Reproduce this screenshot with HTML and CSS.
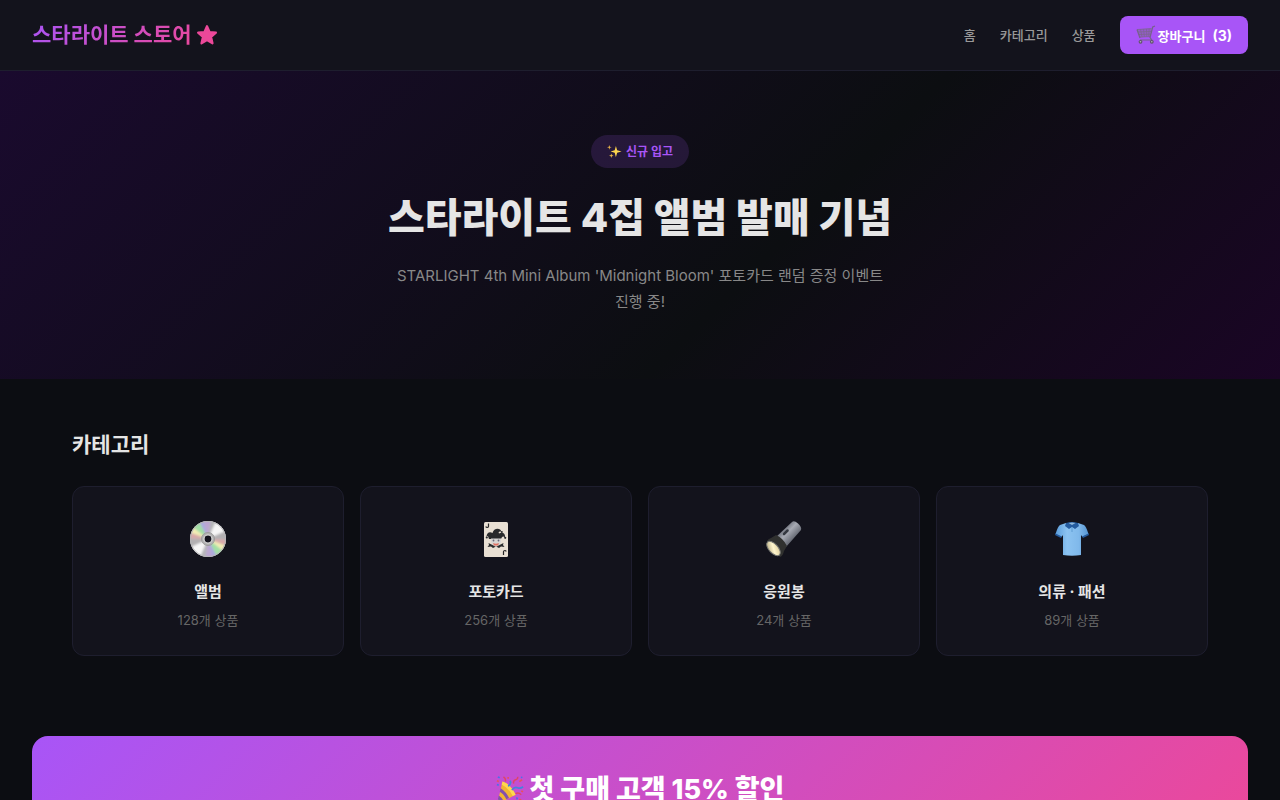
FILE: index.html
```html
<!DOCTYPE html>
<html lang="ko">
<head>
  <meta charset="UTF-8">
  <meta name="viewport" content="width=device-width, initial-scale=1.0">
  <title>스타라이트 스토어</title>
  <link rel="stylesheet" href="styles.css">
</head>
<body>
  <header class="header">
    <a class="logo" href="#">
      <span class="logo-text">스타라이트 스토어</span>
      <svg class="logo-star" viewBox="0 0 20 20" aria-hidden="true">
        <path d="M10 2l2.300 5.300 5.800.6-4.400 3.900 1.300 5.800L10 14.600l-5 3 1.300-5.800L1.900 7.900l5.800-.6z" fill="#ec4899" stroke="#ec4899" stroke-width="2" stroke-linejoin="round"/>
      </svg>
    </a>
    <nav class="nav">
      <a class="nav-link" href="#">홈</a>
      <a class="nav-link" href="#categories">카테고리</a>
      <a class="nav-link" href="#">상품</a>
      <button class="cart-btn" type="button">
        <svg class="cart-icon" viewBox="0 0 20 20" aria-hidden="true">
          <path d="M1 4.500l14.500-1.500-1.500 8.500-10 1z" fill="#8a5fb5" opacity=".7"/>
          <path d="M1 4.500l14.500-.8M2 7l13-.6M2.800 9.500l11.700-.4M3.500 12l10.500-.4M4.500 4.300l1.500 7.700M7.500 4.200l.9 7.600M10.500 4l.3 7.700M13.200 3.800l-.5 7.700" fill="none" stroke="#7d6492" stroke-width=".8"/>
          <path d="M1 4.500l3 8.500M19 1l-2.300 1L14 12.500l1.800 2.500H4" fill="none" stroke="#75628a" stroke-width="1.200"/>
          <circle cx="4.500" cy="16.800" r="1.900" fill="#5d5368"/>
          <circle cx="15.800" cy="16.800" r="1.900" fill="#5d5368"/>
          <circle cx="4.500" cy="16.800" r=".8" fill="#b9aac6"/>
          <circle cx="15.800" cy="16.800" r=".8" fill="#b9aac6"/>
        </svg>
        <span>장바구니</span>
        <span class="cart-count">(3)</span>
      </button>
    </nav>
  </header>

  <main>
    <section class="hero">
      <span class="badge">
        <svg class="badge-icon" viewBox="0 0 16 16" aria-hidden="true">
          <path d="M9.500 2l1.300 4.700L15.500 8l-4.700 1.300L9.500 14 8.200 9.300 3.800 8l4.400-1.300z" fill="#fcd34d"/>
          <path d="M2.500 1l.6 1.900 1.900.6-1.900.6-.6 1.900-.6-1.900L0 3.500l1.900-.6zM4.600 10l.6 1.800 1.800.6-1.800.6-.6 1.800-.6-1.800-1.800-.6 1.800-.6z" fill="#eab54a"/>
        </svg>
        신규 입고
      </span>
      <h1 class="hero-title">스타라이트 4집 앨범 발매 기념</h1>
      <p class="hero-text">STARLIGHT 4th Mini Album 'Midnight Bloom' 포토카드 랜덤 증정 이벤트 진행 중!</p>
    </section>

    <section class="section" id="categories">
      <h2 class="section-title">카테고리</h2>
      <div class="category-grid">
        <a class="category-card" href="#">
          <svg class="category-icon" viewBox="0 0 40 40" aria-hidden="true">
            <defs>
              <filter id="sheen">
                <feGaussianBlur stdDeviation="1"/>
              </filter>
              <clipPath id="disc">
                <circle cx="20" cy="20" r="18"/>
              </clipPath>
            </defs>
            <circle cx="20" cy="20" r="18" fill="#c9c9cb"/>
            <g clip-path="url(#disc)">
              <g filter="url(#sheen)">
                <path d="M20 20L23-2H30z" fill="#b5b5b8"/>
                <path d="M20 20L30-2L44 9z" fill="#f6f6f6"/>
                <path d="M20 20L44 9V21z" fill="#b2b0b2"/>
                <path d="M20 20L44 21V29z" fill="#d9a9a9"/>
                <path d="M20 20L44 29L39 35z" fill="#f3eeb4"/>
                <path d="M20 20L39 35L31 42z" fill="#a2e0a4"/>
                <path d="M20 20L31 42H25z" fill="#aaa8df"/>
                <path d="M20 20L25 42H17z" fill="#bba6d1"/>
                <path d="M20 20L17 42H10z" fill="#b5b5b8"/>
                <path d="M20 20L10 42L-4 31z" fill="#f6f6f6"/>
                <path d="M20 20L-4 31V19z" fill="#b2b0b2"/>
                <path d="M20 20L-4 19V11z" fill="#d9a9a9"/>
                <path d="M20 20L-4 11L1 5z" fill="#f3eeb4"/>
                <path d="M20 20L1 5L9-2z" fill="#a2e0a4"/>
                <path d="M20 20L9-2H15z" fill="#aaa8df"/>
                <path d="M20 20L15-2H23z" fill="#bba6d1"/>
              </g>
            </g>
            <circle cx="20" cy="20" r="17.500" fill="none" stroke="#b6b6b8"/>
            <circle cx="20" cy="20" r="6.500" fill="#b2b2b2" stroke="#9c9c9c"/>
            <circle cx="20" cy="20" r="4" fill="#13131c" stroke="#ddd" stroke-width="1.200"/>
          </svg>
          <h3 class="category-name">앨범</h3>
          <p class="category-count">128개 상품</p>
        </a>
        <a class="category-card" href="#">
          <svg class="category-icon" viewBox="0 0 40 40" aria-hidden="true">
            <rect x="8" y="3" width="24" height="35" rx="1.500" fill="#e8dfd3"/>
            <path d="M9.800 7.500q.3 1 1.400 1t1.300-1.200V4.500M30.200 32.500q-.3-1-1.400-1t-1.300 1.200v3.300" fill="none" stroke="#252525" stroke-width="1.200"/>
            <path d="M13 20c-1-3-1-4-2.500-2 0-4 3-6 6-4 1-5 8-6 9-1-2-1-3.500 0-2.500 1.500 4-2 6.500.5 6 4-2-2-3-1-4 1.500z" fill="#292a2c"/>
            <circle cx="10.800" cy="18.500" r="1.100" fill="#292a2c"/>
            <circle cx="25.800" cy="13" r="1" fill="#292a2c"/>
            <circle cx="29.200" cy="18.800" r="1.100" fill="#292a2c"/>
            <path d="M15 19.500h10V23q-2 5-5 5t-5-5z" fill="#d8d5d3"/>
            <circle cx="17.500" cy="21.500" r=".9" fill="#667"/>
            <circle cx="22.500" cy="21.500" r=".9" fill="#667"/>
            <path d="M17 24q3 1.500 6 0l-1 2.500h-4z" fill="#e07060"/>
            <path d="M12.500 24l4 2 3.500 2 3.500-2 4-2-.5 2 1.500 2-3.500-.5-2 1.500-3-1.500-3 1.500-2-1.500-3.500.5 1.500-2z" fill="#292a2c"/>
          </svg>
          <h3 class="category-name">포토카드</h3>
          <p class="category-count">256개 상품</p>
        </a>
        <a class="category-card" href="#">
          <svg class="category-icon" viewBox="0 0 40 40" aria-hidden="true">
            <defs>
              <linearGradient id="torch" x1="0" y1="0" x2="1" y2="1">
                <stop offset=".25" stop-color="#626670"/>
                <stop offset=".45" stop-color="#a7aab3"/>
                <stop offset=".75" stop-color="#555963"/>
              </linearGradient>
              <linearGradient id="lens" x1="0" y1="0" x2="1" y2="1">
                <stop offset="0" stop-color="#a69a72"/>
                <stop offset=".5" stop-color="#fff6ce"/>
                <stop offset="1" stop-color="#d5c48e"/>
              </linearGradient>
            </defs>
            <path d="M12 18L28 3q2-2 6 1.500t3 6.500L22 28z" fill="url(#torch)"/>
            <path d="M3 22q1-2 4-3l5-3q7 3 11 11l-3 5q-1 5-4 6z" fill="#30312f"/>
            <ellipse cx="9.500" cy="29.500" rx="4.500" ry="8.800" transform="rotate(-43 9.500 29.500)" fill="url(#lens)" stroke="#777975"/>
            <path d="M20 15l3.500-3.500" stroke="#343840" stroke-width="2.500" stroke-linecap="round"/>
          </svg>
          <h3 class="category-name">응원봉</h3>
          <p class="category-count">24개 상품</p>
        </a>
        <a class="category-card" href="#">
          <svg class="category-icon" viewBox="0 0 40 40" aria-hidden="true">
            <defs>
              <linearGradient id="shirt" x1="0" y1="0" x2="1" y2="0">
                <stop offset="0" stop-color="#5a9cda"/>
                <stop offset=".35" stop-color="#8cc3f1"/>
                <stop offset=".7" stop-color="#80b9eb"/>
                <stop offset="1" stop-color="#5695d2"/>
              </linearGradient>
            </defs>
            <path d="M14 4L8 6Q6 7 3.500 15l6 3 1.500-2v20q9 1.500 18 0V16l1.500 2 6-3Q34 7 32 6l-6-2z" fill="url(#shirt)"/>
            <path d="M3.500 14.500l6.500 3-1 1.500-6-3zM36.500 14.500l-6.500 3 1 1.500 6-3z" fill="#245b9e"/>
            <path d="M14 4q6-2 12 0l1 3-4 3-3-2-3 2-4-3z" fill="#245b9e"/>
            <path d="M16.500 4q3.500-1 7 0L20 6z" fill="#8eb8dc"/>
            <path d="M20 8v5" stroke="#5e9cd2"/>
          </svg>
          <h3 class="category-name">의류 · 패션</h3>
          <p class="category-count">89개 상품</p>
        </a>
      </div>
    </section>

    <section class="promo">
      <h2 class="promo-title">
        <svg class="promo-icon" viewBox="0 0 30 30" aria-hidden="true">
          <path d="M7 6q8 2 14 14L4 29q-3 1-2-2z" fill="#f2b632"/>
          <path d="M7 6q8 2 14 14l-3 1.500Q13 12 6 9z" fill="#ffd84f"/>
          <path d="M5 13q6 4 9 10.500l-3 1.500Q8 19 4 17zM3 21q3 2 5 5.500l-3 1.500-3-3z" fill="#8550ad"/>
          <path d="M13 11q4-3 2-6M17 15q3-4 6-2.500t6-1" stroke="#4285dd" stroke-width="1.800" fill="none"/>
          <path d="M10 6q1-3-2-5M19 8q-1-3 2-4t2-3M21 19q3-2 6 1" stroke="#df4568" stroke-width="1.600" fill="none"/>
          <path d="M1 5l2 1M25 6l3-2M27 16l2 1M13 1v2M25 25l2 1" stroke="#e8515e" stroke-width="1.800"/>
          <path d="M2 1l2 1M1 9l2 1M27 1l1 1M22 23l1 2" stroke="#4b72e8" stroke-width="1.800"/>
        </svg>
        첫 구매 고객 15% 할인
      </h2>
    </section>
  </main>
</body>
</html>
```
FILE: styles.css
```css
* {
  margin: 0;
  padding: 0;
  box-sizing: border-box;
}

body {
  background: #0c0d12;
  color: #e5e5e5;
  font-family: Inter, "Noto Sans CJK KR", sans-serif;
  line-height: 1.6;
  word-break: keep-all;
}

a {
  color: inherit;
  text-decoration: none;
}

/* Header */
.header {
  display: flex;
  align-items: center;
  justify-content: space-between;
  padding: 16px 32px;
  background: #13131c;
  border-bottom: 1px solid #1e1e2e;
}

.logo {
  display: flex;
  align-items: center;
  gap: 4px;
  font-size: 21px;
  font-weight: 700;
  line-height: 36px;
}

.logo-text {
  background: linear-gradient(135deg, #a855f7, #ec4899);
  background-clip: text;
  -webkit-background-clip: text;
  color: transparent;
}

.logo-star {
  width: 22px;
  height: 22px;
}

.nav {
  display: flex;
  align-items: center;
  gap: 24px;
  font-size: 13px;
}

.nav-link {
  color: #999;
  font-weight: 500;
}

.cart-btn {
  display: flex;
  align-items: center;
  gap: 2px;
  height: 38px;
  padding: 0 16px;
  border: none;
  border-radius: 8px;
  background: #a855f7;
  color: #fff;
  font-family: inherit;
  font-size: 13px;
  font-weight: 700;
  cursor: pointer;
}

.cart-icon {
  width: 20px;
  height: 20px;
}

.cart-count {
  margin-left: 5px;
  font-size: 14px;
}

/* Hero */
.hero {
  display: flex;
  flex-direction: column;
  align-items: center;
  padding: 64px 32px;
  background: linear-gradient(135deg, #1a0a2e 0%, #0c0e11 60%, #1a0525 100%);
  text-align: center;
}

.badge {
  display: flex;
  align-items: center;
  gap: 4px;
  margin-bottom: 20px;
  padding: 6px 16px;
  border-radius: 20px;
  background: rgba(168, 85, 247, 0.15);
  color: #a855f7;
  font-size: 12px;
  font-weight: 600;
  line-height: 21px;
}

.badge-icon {
  width: 15px;
  height: 15px;
}

.hero-title {
  margin-bottom: 16px;
  font-size: 40px;
  font-weight: 800;
  line-height: 59px;
}

.hero-text {
  max-width: 500px;
  color: #888;
  font-size: 15px;
  line-height: 26px;
}

/* Categories */
.section {
  max-width: 1200px;
  margin: 0 auto;
  padding: 48px 32px;
}

.section-title {
  margin-bottom: 24px;
  font-size: 21px;
  font-weight: 700;
  line-height: 35px;
}

.category-grid {
  display: grid;
  grid-template-columns: repeat(4, 1fr);
  gap: 16px;
}

.category-card {
  display: flex;
  flex-direction: column;
  align-items: center;
  padding: 32px 24px 24px;
  border: 1px solid #1e1e2e;
  border-radius: 12px;
  background: #13131c;
}

.category-icon {
  width: 40px;
  height: 40px;
  margin-bottom: 20px;
}

.category-name {
  font-size: 15px;
  font-weight: 700;
  line-height: 26px;
}

.category-count {
  margin-top: 4px;
  color: #666;
  font-size: 13px;
  line-height: 22px;
}

/* Promo banner */
.promo {
  margin: 32px 32px 48px;
  padding: 32px;
  border-radius: 16px;
  background: linear-gradient(135deg, #a855f7, #ec4899);
  color: #fff;
}

.promo-title {
  display: flex;
  align-items: center;
  justify-content: center;
  gap: 6px;
  font-size: 27px;
  font-weight: 800;
  line-height: 44px;
}

.promo-icon {
  width: 28px;
  height: 28px;
}
```
